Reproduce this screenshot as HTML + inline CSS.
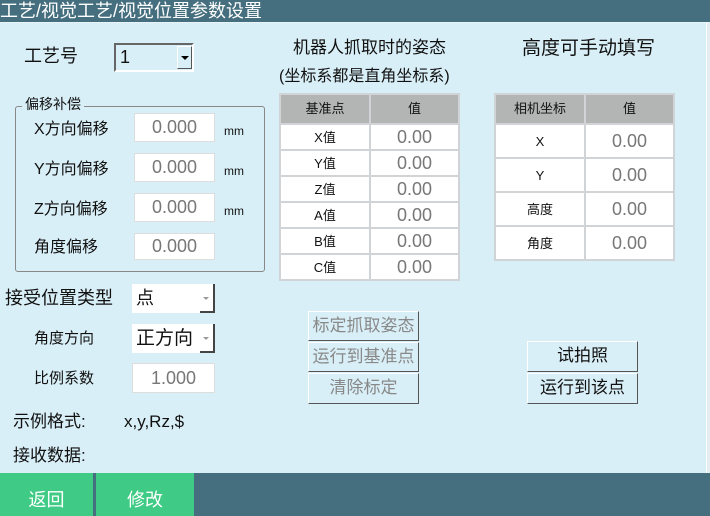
<!DOCTYPE html>
<html><head><meta charset="utf-8"><style>
*{margin:0;padding:0;box-sizing:border-box}
html,body{width:710px;height:516px;overflow:hidden}
body{position:relative;background:#d9eff7;font-family:"Liberation Sans","Noto Sans CJK SC",sans-serif;color:#111;line-height:1.15}
.a{position:absolute;white-space:nowrap}
.hdr{left:0;top:0;width:710px;height:23px;background:#456f7e;color:#fff;font-size:18px;line-height:22px;border-bottom:1px solid #e8f4f8}
.ft{left:0;top:473px;width:710px;height:43px;background:#456f7e}
.gb{top:473px;height:43px;background:#3fcb85;color:#fff;font-size:18px;text-align:center;line-height:54px}
.in{background:#fff;border:1px solid #ddd;color:#777;font-size:18px;text-align:center}
.lbl{font-size:16px}
table{border-collapse:collapse;position:absolute;background:#fff}
td{border:2px solid #d0d4d6;text-align:center;font-size:13px;line-height:1}
td.v{font-size:18px;color:#777}
th{background:#b3b5b4;border:2px solid #d0d4d6;font-weight:normal;font-size:13px}
.btn{background:#d9eff7;border:1px solid #fff;border-right-color:#555;border-bottom-color:#555;font-size:17px;text-align:center;line-height:28px}
.dis{color:#888}
</style></head><body>
<div class="a hdr">工艺/视觉工艺/视觉位置参数设置</div>
<div class="a" style="left:706px;top:23px;width:4px;height:450px;background:#e4eef1;border-left:1px solid #fff"></div>

<div class="a" style="left:24px;top:46px;font-size:18px">工艺号</div>
<div class="a" style="left:114px;top:43px;width:80px;height:29px;border:2px solid #666;border-right-color:#fff;border-bottom-color:#fff;background:#d9eff7;font-size:18px;line-height:25px;padding-left:4px">1</div>
<div class="a" style="left:177px;top:46px;width:15px;height:23px;background:#d9eff7;border:1px solid #fff;border-right-color:#555;border-bottom-color:#555"></div>
<div class="a" style="left:181px;top:56px;width:0;height:0;border-left:4px solid transparent;border-right:4px solid transparent;border-top:4px solid #000"></div>

<div class="a" style="left:15px;top:106px;width:250px;height:166px;border:1px solid #888;border-radius:3px"></div>
<div class="a" style="left:22px;top:96px;background:#d9eff7;padding:0 3px;font-size:14px">偏移补偿</div>
<div class="a lbl" style="left:34px;top:121px">X方向偏移</div>
<div class="a lbl" style="left:34px;top:161px">Y方向偏移</div>
<div class="a lbl" style="left:34px;top:201px">Z方向偏移</div>
<div class="a lbl" style="left:34px;top:239px">角度偏移</div>
<div class="a in" style="left:134px;top:113px;width:81px;height:29px;line-height:27px">0.000</div>
<div class="a in" style="left:134px;top:153px;width:81px;height:29px;line-height:27px">0.000</div>
<div class="a in" style="left:134px;top:193px;width:81px;height:29px;line-height:27px">0.000</div>
<div class="a in" style="left:134px;top:233px;width:81px;height:27px;line-height:25px">0.000</div>
<div class="a" style="left:224px;top:125px;font-size:12px">mm</div>
<div class="a" style="left:224px;top:165px;font-size:12px">mm</div>
<div class="a" style="left:224px;top:205px;font-size:12px">mm</div>

<div class="a" style="left:5px;top:288px;font-size:18px">接受位置类型</div>
<div class="a" style="left:132px;top:284px;width:82px;height:29px;background:#fff;font-size:18px;line-height:29px;padding-left:4px">点</div>
<div class="a" style="left:200px;top:284px;width:15px;height:29px;background:#fff;border-right:2px solid #444;border-bottom:2px solid #444"></div>
<div class="a" style="left:203px;top:297px;border-left:3px solid transparent;border-right:3px solid transparent;border-top:3px solid #999"></div>
<div class="a" style="left:34px;top:330px;font-size:15px">角度方向</div>
<div class="a" style="left:132px;top:324px;width:82px;height:29px;background:#fff;font-size:19px;line-height:29px;padding-left:4px">正方向</div>
<div class="a" style="left:200px;top:324px;width:15px;height:29px;background:#fff;border-right:2px solid #444;border-bottom:2px solid #444"></div>
<div class="a" style="left:203px;top:337px;border-left:3px solid transparent;border-right:3px solid transparent;border-top:3px solid #999"></div>
<div class="a" style="left:34px;top:370px;font-size:15px">比例系数</div>
<div class="a in" style="left:132px;top:363px;width:83px;height:30px;line-height:28px">1.000</div>

<div class="a" style="left:13px;top:412px;font-size:17px">示例格式:</div>
<div class="a" style="left:124px;top:412px;font-size:17px">x,y,Rz,$</div>
<div class="a" style="left:13px;top:446px;font-size:17px">接收数据:</div>

<div class="a" style="left:293px;top:38px;font-size:17px">机器人抓取时的姿态</div>
<div class="a" style="left:279px;top:68px;font-size:16px">(坐标系都是直角坐标系)</div>
<div class="a" style="left:522px;top:38px;font-size:19px">高度可手动填写</div>

<table style="left:279px;top:93px;width:181px">
<tr style="height:30px"><th style="width:90px">基准点</th><th>值</th></tr>
<tr style="height:26px"><td>X值</td><td class="v">0.00</td></tr>
<tr style="height:26px"><td>Y值</td><td class="v">0.00</td></tr>
<tr style="height:26px"><td>Z值</td><td class="v">0.00</td></tr>
<tr style="height:26px"><td>A值</td><td class="v">0.00</td></tr>
<tr style="height:26px"><td>B值</td><td class="v">0.00</td></tr>
<tr style="height:26px"><td>C值</td><td class="v">0.00</td></tr>
</table>
<table style="left:494px;top:93px;width:181px">
<tr style="height:30px"><th style="width:90px">相机坐标</th><th>值</th></tr>
<tr style="height:34px"><td>X</td><td class="v">0.00</td></tr>
<tr style="height:34px"><td>Y</td><td class="v">0.00</td></tr>
<tr style="height:34px"><td>高度</td><td class="v">0.00</td></tr>
<tr style="height:34px"><td>角度</td><td class="v">0.00</td></tr>
</table>

<div class="a btn dis" style="left:308px;top:311px;width:111px;height:30px">标定抓取姿态</div>
<div class="a btn dis" style="left:308px;top:342px;width:111px;height:30px">运行到基准点</div>
<div class="a btn dis" style="left:308px;top:373px;width:111px;height:31px">清除标定</div>
<div class="a btn" style="left:527px;top:341px;width:111px;height:31px">试拍照</div>
<div class="a btn" style="left:527px;top:373px;width:111px;height:31px">运行到该点</div>

<div class="a ft"></div>
<div class="a gb" style="left:0;width:93px">返回</div>
<div class="a gb" style="left:96px;width:98px">修改</div>
</body></html>
